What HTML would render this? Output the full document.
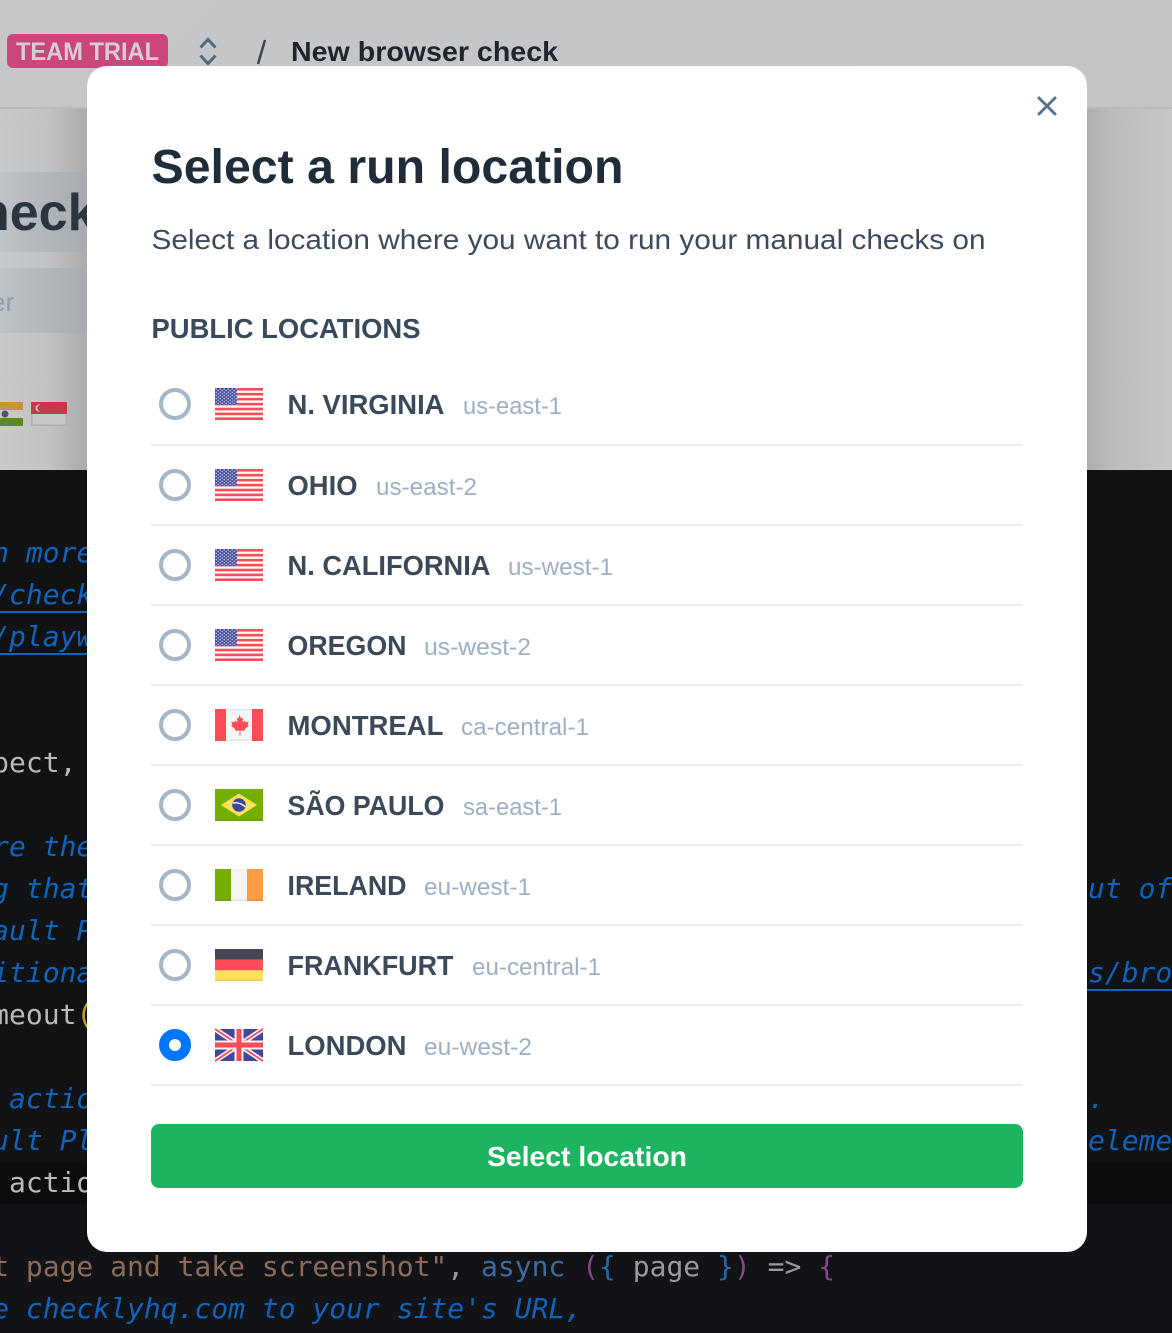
<!DOCTYPE html>
<html><head><meta charset="utf-8"><style>
html,body{margin:0;padding:0;width:1172px;height:1333px;overflow:hidden;background:#111214}
svg{display:block}
text{font-family:"Liberation Sans",sans-serif}
.m{font-family:"DejaVu Sans Mono",monospace;font-size:28px;white-space:pre}
.i{font-style:italic;fill:#0f63b9}
.g{fill:#b9b9b9}
.l{font-weight:700;font-size:28px;fill:#3a4a5b}
.c{font-size:24px;fill:#9db0c3}
</style></head><body>
<svg width="1172" height="1333" viewBox="0 0 1172 1333" xmlns="http://www.w3.org/2000/svg">
<defs>
<linearGradient id="top" x1="0" y1="0" x2="1" y2="0.1"><stop offset="0" stop-color="#c5c7c8"/><stop offset="1" stop-color="#c3c5c7"/></linearGradient>
<linearGradient id="gl" x1="0" y1="0" x2="1" y2="0"><stop offset="0" stop-color="#c8c9c8"/><stop offset=".55" stop-color="#c2c3c3"/><stop offset="1" stop-color="#a9aaae"/></linearGradient>
<linearGradient id="g1" x1="0" y1="0" x2="1" y2="0"><stop offset="0" stop-color="#bfc3c6"/><stop offset="1" stop-color="#a6abb0"/></linearGradient>
<linearGradient id="gr" x1="0" y1="0" x2="1" y2="0"><stop offset="0" stop-color="#adaeb1"/><stop offset=".35" stop-color="#bdbdbe"/><stop offset="1" stop-color="#c7c7c7"/></linearGradient>
<pattern id="st" width="4" height="3.2" patternUnits="userSpaceOnUse"><circle cx="1.2" cy="1" r=".75" fill="#dfe2f2"/><circle cx="3.2" cy="2.6" r=".75" fill="#dfe2f2"/></pattern>
<g id="us">
<rect width="48" height="32" fill="#fff"/>
<g fill="#ff4b55"><rect y="0" width="48" height="2.6"/><rect y="4.9" width="48" height="2.6"/><rect y="9.85" width="48" height="2.6"/><rect y="14.8" width="48" height="2.6"/><rect y="19.7" width="48" height="2.6"/><rect y="24.6" width="48" height="2.6"/><rect y="29.4" width="48" height="2.6"/></g>
<rect width="22" height="17" fill="#41479b"/><rect width="22" height="17" fill="url(#st)"/>
</g>
<g id="ca"><rect width="48" height="32" fill="#f5f5f5"/><rect width="11" height="32" fill="#ff4b55"/><rect x="37" width="11" height="32" fill="#ff4b55"/><rect x="11" y="30.5" width="26" height="1.5" fill="#e6e6e6"/><rect x="11" width="26" height="1.5" fill="#e8e8e8"/>
<path d="M24 5.500l2.200 4 2.100-1-.9 5 2.500-2 .7 1.800 3.100-.5-1 3.200 1.300.8-4.600 3.600.5 1.600-4.500-.6.2 4.800h-1.200l.2-4.800-4.500.6.5-1.600-4.600-3.600 1.300-.8-1-3.200 3.100.5.7-1.800 2.500 2-.9-5 2.100 1z" fill="#ff4b55"/></g>
<g id="brf"><rect width="48" height="32" fill="#73af00"/><rect y="30.6" width="48" height="1.4" fill="#6a9f06"/><path d="M24 4.500L42 16 24 27.500 6 16z" fill="#ffe15a"/><circle cx="24" cy="16" r="6.800" fill="#41479b"/><path d="M17.600 14c4.500-.8 9.500.6 12.800 4" stroke="#f5f5f5" stroke-width="1.400" fill="none"/></g>
<g id="ie"><rect width="48" height="32" fill="#f5f5f5"/><rect width="16" height="32" fill="#73af00"/><rect x="32" width="16" height="32" fill="#ff9b44"/><rect x="16" y="30.6" width="16" height="1.4" fill="#e4e4e4"/><rect y="30.6" width="16" height="1.4" fill="#6a9f06"/><rect x="32" y="30.6" width="16" height="1.4" fill="#ec8f3f"/></g>
<g id="de"><rect width="48" height="10.7" fill="#464655"/><rect y="10.7" width="48" height="10.7" fill="#ff4b55"/><rect y="21.3" width="48" height="10.7" fill="#ffe15a"/><rect y="30.6" width="48" height="1.4" fill="#e8cc52"/></g>
<g id="uk"><rect width="48" height="32" fill="#41479b"/>
<path d="M0 0L48 32M48 0L0 32" stroke="#f5f5f5" stroke-width="5"/>
<path d="M0 0L24 16M48 32L24 16M48 0L24 16M0 32L24 16" stroke="#ff4b55" stroke-width="1.700"/>
<rect x="19.500" width="9" height="32" fill="#f5f5f5"/><rect y="11.500" width="48" height="9" fill="#f5f5f5"/>
<rect x="21.500" width="5" height="32" fill="#ff4b55"/><rect y="13.500" width="48" height="5" fill="#ff4b55"/></g>
<circle id="r" r="14" fill="#fff" stroke="#a5b6c6" stroke-width="4"/>
</defs>

<!-- background -->
<rect width="1172" height="1333" fill="#111214"/>
<rect width="1172" height="107" fill="url(#top)"/>
<rect y="107" width="1172" height="2" fill="#b8babd"/>
<rect y="109" width="87" height="361" fill="url(#gl)"/>
<rect x="1087" y="109" width="85" height="361" fill="url(#gr)"/>
<rect y="172" width="87" height="80" fill="url(#g1)"/>
<rect y="268" width="87" height="65" fill="url(#g1)"/>
<rect x="0" y="1162" width="87" height="42" fill="#0c0c0e"/>
<rect x="1087" y="1162" width="85" height="42" fill="#0c0c0e"/>
<rect x="0" y="1204" width="1172" height="129" fill="#121317"/>

<!-- top bar -->
<rect x="7" y="34" width="161" height="34" rx="6" fill="#c9477a"/>
<text x="16" y="60" font-size="25" font-weight="700" fill="#d5cfd4" textLength="143" lengthAdjust="spacingAndGlyphs">TEAM TRIAL</text>
<path d="M200.500 47.500L208 39.500L215.500 47.500M200.500 55.500L208 63.500L215.500 55.500" fill="none" stroke="#50667c" stroke-width="3"/>
<path d="M265 40L258 64" stroke="#3a4652" stroke-width="2.500"/>
<text x="291" y="61" font-size="28" font-weight="700" fill="#1e252d" textLength="267" lengthAdjust="spacingAndGlyphs">New browser check</text>

<!-- left content -->
<text x="-22" y="230" font-size="52" font-weight="700" fill="#2a3540">neck</text>
<text x="-9" y="311" font-size="26" fill="#8e9cab">er</text>
<rect x="-24" y="402" width="47" height="8" fill="#c9923d"/><rect x="-24" y="410" width="47" height="8" fill="#c8c8c8"/><rect x="-24" y="418" width="47" height="8" fill="#5f8a1d"/><circle cx="5" cy="414" r="3.500" fill="#4a4f8f"/>
<rect x="31" y="402" width="36" height="12" fill="#c23a4a"/><rect x="31" y="414" width="36" height="12" fill="#c8c8c8"/><path d="M31.750 414v11.250h34.500V414" fill="none" stroke="#adadad" stroke-width="1.500"/><circle cx="39" cy="408" r="3.500" fill="#e6c9cc"/><circle cx="40.500" cy="408" r="3.200" fill="#c23a4a"/>

<!-- code -->
<text class="m i" x="-7.860" y="562">n more</text>
<text class="m i" x="-7.860" y="604">/check</text><rect y="611" width="87" height="2" fill="#0f63b9"/>
<text class="m i" x="-7.860" y="646">/playw</text><rect y="653" width="87" height="2" fill="#0f63b9"/>
<text class="m g" x="-7.860" y="772">pect,</text>
<text class="m i" x="-7.860" y="856">re the</text>
<text class="m i" x="-7.860" y="898">g that</text>
<text class="m i" x="-7.860" y="940">ault P</text>
<text class="m i" x="-7.860" y="982">itiona</text>
<text class="m g" x="-7.860" y="1024">meout<tspan fill="#c89b1d">(</tspan></text>
<text class="m i" x="9" y="1108">actio</text>
<text class="m i" x="-7.860" y="1150">ult Pl</text>
<text class="m g" x="9" y="1192">actio</text>
<text class="m i" x="1088" y="898">ut of</text>
<text class="m i" x="1088" y="982">s/bro</text><rect x="1087" y="989" width="85" height="2" fill="#0f63b9"/>
<text class="m i" x="1088" y="1108">.</text>
<text class="m i" x="1088" y="1150">eleme</text>
<text class="m" x="-7.860" y="1276" fill="#8f6a58">t page and take screenshot"<tspan fill="#9a9a9a">, </tspan><tspan fill="#3c6c9b">async </tspan><tspan fill="#84488a">(</tspan><tspan fill="#1e6aad">{ </tspan><tspan fill="#9a9a9a">page </tspan><tspan fill="#1e6aad">}</tspan><tspan fill="#84488a">)</tspan><tspan fill="#9a9a9a"> =&gt; </tspan><tspan fill="#84488a">{</tspan></text>
<text class="m i" x="-7.860" y="1318">e checklyhq.com to your site's URL,</text>

<!-- modal -->
<rect x="87" y="66" width="1000" height="1186" rx="20" fill="#fff"/>
<path d="M1039 98L1055 114M1055 98L1039 114" stroke="#5a738c" stroke-width="3" stroke-linecap="round"/>
<text x="151.500" y="183" font-size="48" font-weight="700" fill="#1f2d3a" textLength="472" lengthAdjust="spacingAndGlyphs">Select a run location</text>
<text x="151.500" y="249" font-size="28" fill="#3b4b5c" textLength="834" lengthAdjust="spacingAndGlyphs">Select a location where you want to run your manual checks on</text>
<text x="151.500" y="338" font-size="28" font-weight="700" fill="#3a4a5b" textLength="269" lengthAdjust="spacingAndGlyphs">PUBLIC LOCATIONS</text>

<g fill="#e9eef3"><rect x="151" y="444" width="872" height="2"/><rect x="151" y="524" width="872" height="2"/><rect x="151" y="604" width="872" height="2"/><rect x="151" y="684" width="872" height="2"/><rect x="151" y="764" width="872" height="2"/><rect x="151" y="844" width="872" height="2"/><rect x="151" y="924" width="872" height="2"/><rect x="151" y="1004" width="872" height="2"/><rect x="151" y="1084" width="872" height="2"/></g>

<use href="#r" x="175" y="404"/><use href="#us" x="215" y="388"/>
<text class="l" x="287.500" y="414" textLength="157" lengthAdjust="spacingAndGlyphs">N. VIRGINIA</text><text class="c" x="463" y="414" textLength="99" lengthAdjust="spacingAndGlyphs">us-east-1</text>
<use href="#r" x="175" y="485"/><use href="#us" x="215" y="469"/>
<text class="l" x="287.500" y="495" textLength="70" lengthAdjust="spacingAndGlyphs">OHIO</text><text class="c" x="376" y="495" textLength="101" lengthAdjust="spacingAndGlyphs">us-east-2</text>
<use href="#r" x="175" y="565"/><use href="#us" x="215" y="549"/>
<text class="l" x="287.500" y="575" textLength="203" lengthAdjust="spacingAndGlyphs">N. CALIFORNIA</text><text class="c" x="508" y="575" textLength="105" lengthAdjust="spacingAndGlyphs">us-west-1</text>
<use href="#r" x="175" y="645"/><use href="#us" x="215" y="629"/>
<text class="l" x="287.500" y="655" textLength="119" lengthAdjust="spacingAndGlyphs">OREGON</text><text class="c" x="424" y="655" textLength="107" lengthAdjust="spacingAndGlyphs">us-west-2</text>
<use href="#r" x="175" y="725"/><use href="#ca" x="215" y="709"/>
<text class="l" x="287.500" y="735" textLength="156" lengthAdjust="spacingAndGlyphs">MONTREAL</text><text class="c" x="461" y="735" textLength="128" lengthAdjust="spacingAndGlyphs">ca-central-1</text>
<use href="#r" x="175" y="805"/><use href="#brf" x="215" y="789"/>
<text class="l" x="287.500" y="815" textLength="157" lengthAdjust="spacingAndGlyphs">SÃO PAULO</text><text class="c" x="463" y="815" textLength="99" lengthAdjust="spacingAndGlyphs">sa-east-1</text>
<use href="#r" x="175" y="885"/><use href="#ie" x="215" y="869"/>
<text class="l" x="287.500" y="895" textLength="119" lengthAdjust="spacingAndGlyphs">IRELAND</text><text class="c" x="424" y="895" textLength="107" lengthAdjust="spacingAndGlyphs">eu-west-1</text>
<use href="#r" x="175" y="965"/><use href="#de" x="215" y="949"/>
<text class="l" x="287.500" y="975" textLength="166" lengthAdjust="spacingAndGlyphs">FRANKFURT</text><text class="c" x="472" y="975" textLength="129" lengthAdjust="spacingAndGlyphs">eu-central-1</text>
<circle cx="175" cy="1045" r="11" fill="#fff" stroke="#0075ff" stroke-width="10"/><use href="#uk" x="215" y="1029"/>
<text class="l" x="287.500" y="1055" textLength="119" lengthAdjust="spacingAndGlyphs">LONDON</text><text class="c" x="424" y="1055" textLength="108" lengthAdjust="spacingAndGlyphs">eu-west-2</text>

<rect x="151" y="1124" width="872" height="64" rx="8" fill="#1db45f"/>
<text x="487" y="1166" font-size="28" font-weight="700" fill="#fff" textLength="200" lengthAdjust="spacingAndGlyphs">Select location</text>
</svg>
</body></html>
